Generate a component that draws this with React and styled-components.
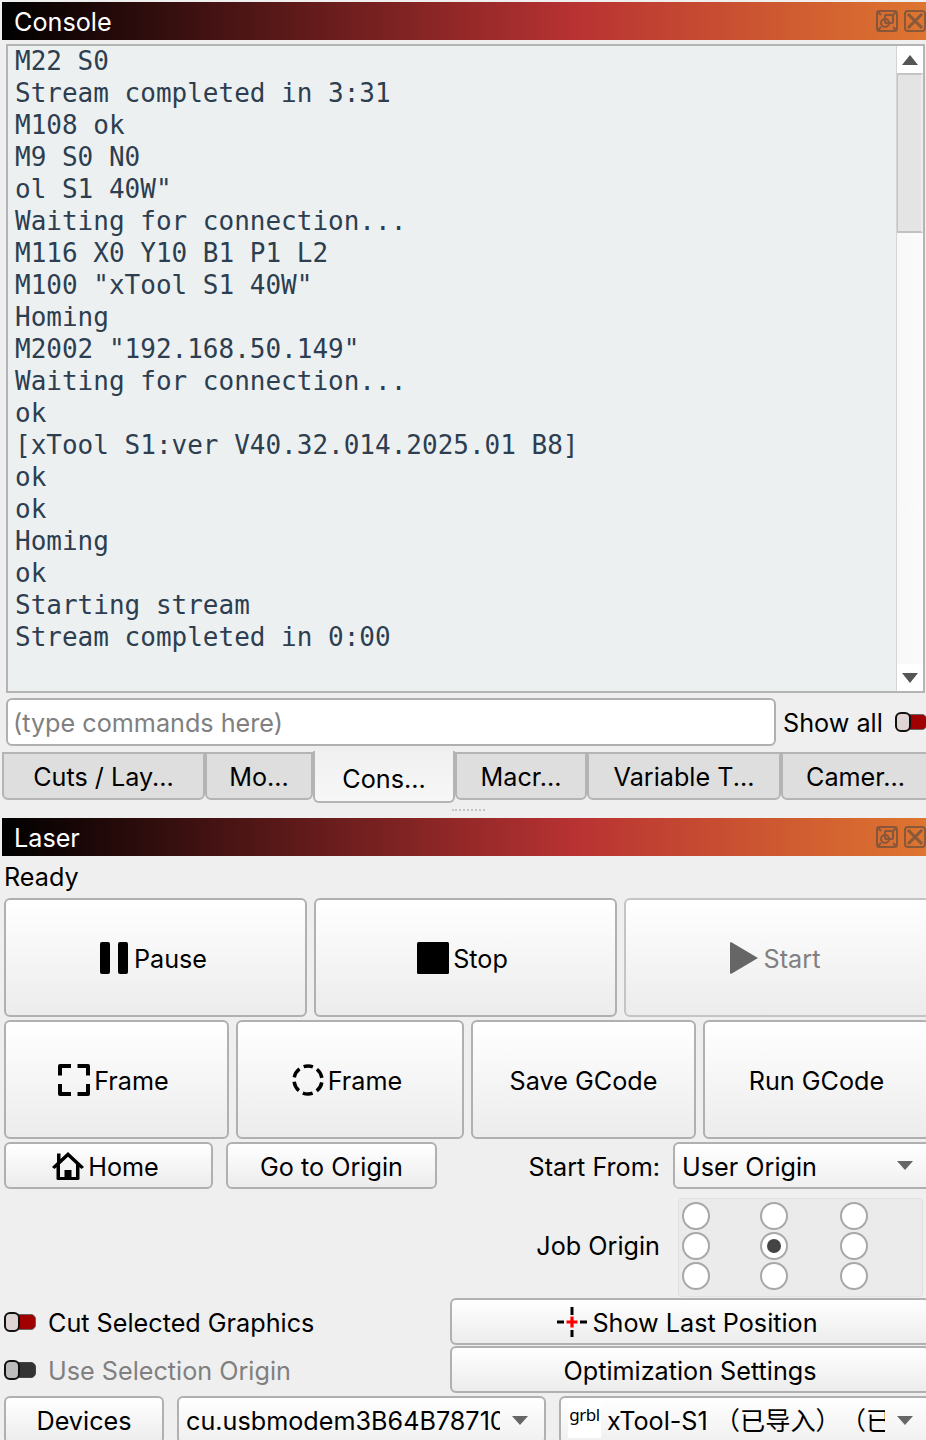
import React from 'react';
import styled, { createGlobalStyle } from 'styled-components';

const GlobalStyle = createGlobalStyle`
  html, body {
    margin: 0;
    padding: 0;
    background: #efefef;
    overflow: hidden;
  }
  * { box-sizing: border-box; }
`;

const SANS = `Inter, "Liberation Sans", "Noto Sans CJK SC", sans-serif`;

const Page = styled.div`
  width: 930px;
  height: 1440px;
  overflow: hidden;
  padding-top: 2px;
  background: #efefef;
  color: #000;
  font-family: ${SANS};
  font-size: 25.2px;
  line-height: 32px;
`;

// text sits a touch below the box centre in the original toolkit
const Label = styled.span`
  display: block;
  padding-top: 2px;
  white-space: nowrap;
`;

const TitleBar = styled.div`
  height: 38px;
  margin-left: 2px;
  width: 924px;
  padding: 0 0 0 12px;
  display: flex;
  align-items: center;
  justify-content: space-between;
  color: #fff;
  background: linear-gradient(90deg, #000 0%, #b83232 62%, #de7530 100%);
`;

const TitleIcons = styled.div`
  display: flex;
  gap: 6px;
  opacity: 0.55;
  filter: blur(0.5px);
`;

const ConsoleBox = styled.div`
  margin: 4px 0 0 6px;
  width: 919px;
  height: 649px;
  display: flex;
  border: 2px solid #b4b4b4;
  background: #ecf0f1;
`;

const ConsoleText = styled.pre`
  flex: 1;
  margin: -1px 0 0;
  padding: 0 0 0 7px;
  font-family: "DejaVu Sans Mono", "Liberation Mono", monospace;
  font-size: 26px;
  line-height: 32px;
  color: #2c3e50;
`;

const ScrollBar = styled.div`
  width: 27px;
  display: flex;
  flex-direction: column;
  background: linear-gradient(90deg, #f8f8f8, #fbfbfb);
  border-left: 1px solid #d4d4d4;
`;

const ScrollButton = styled.div`
  height: 27px;
  display: flex;
  align-items: center;
  justify-content: center;
  background: #fff;
`;

const ScrollHandle = styled.div`
  height: 160px;
  background: #e4e4e4;
  border-top: 2px solid #c4c4c4;
  border-bottom: 2px solid #c0c0c0;
  border-left: 1px solid #c4c4c4;
  border-right: 2px solid #ededed;
`;

const ScrollGap = styled.div`
  flex: 1;
`;

const InputRow = styled.div`
  display: flex;
  align-items: center;
  margin: 5px 0 0 6px;
  height: 48px;
`;

const CommandInput = styled.div`
  width: 770px;
  height: 48px;
  padding: 0 0 0 5px;
  display: flex;
  align-items: center;
  color: #808080;
  background: #fff;
  border: 2px solid #b0b0b0;
  border-radius: 6px;
`;

const ShowAll = styled(Label)`
  margin: 0 12px 0 7px;
`;

const Track = styled.span`
  position: relative;
  display: inline-block;
  flex: none;
  width: 32px;
  height: 16px;
  border-radius: 5px;
  background: ${(p) => (p.$off ? '#333' : '#a00000')};
  border: 1px solid ${(p) => (p.$off ? '#444' : '#666')};
`;

const Knob = styled.span`
  position: absolute;
  left: -1px;
  top: -3px;
  width: 16px;
  height: 20px;
  border-radius: 6px;
  background: ${(p) => (p.$off ? '#bdbdbd' : '#dfd5d5')};
  border: 2px solid #111;
`;

const TabBar = styled.div`
  display: flex;
  align-items: flex-start;
  margin: 6px 0 0 2px;
  height: 53px;
`;

const Tab = styled.div`
  width: ${(p) => p.$w}px;
  height: ${(p) => (p.$active ? 52 : 48)}px;
  padding-top: ${(p) => (p.$active ? 12 : 7)}px;
  margin-top: ${(p) => (p.$active ? -1 : 0)}px;
  text-align: center;
  background: ${(p) => (p.$active ? 'linear-gradient(180deg,#f0f0f0,#f7f7f7)' : '#dedede')};
  border: 2px solid #b4b4b4;
  border-top-width: ${(p) => (p.$active ? 0 : 2)}px;
  border-radius: 0 0 6px 6px;
`;

const Splitter = styled.div`
  margin: 4px 0 0 452px;
  width: 33px;
  height: 8px;
  border-top: 2px dotted #c4c4c4;
`;

const LaserPanel = styled.div`
  margin-top: 1px;
`;

const Status = styled.div`
  margin: 5px 0 0 4px;
  height: 32px;
`;

const ButtonRow = styled.div`
  display: grid;
  grid-template-columns: ${(p) => p.$cols};
  column-gap: ${(p) => p.$gap || 7}px;
  margin: ${(p) => p.$top || 3}px 0 0 4px;
`;

const Button = styled.div`
  height: ${(p) => p.$h || 119}px;
  display: flex;
  align-items: center;
  justify-content: center;
  gap: 4px;
  padding-right: ${(p) => (p.$icon ? 6 : 0)}px;
  color: ${(p) => (p.$disabled ? '#808080' : '#000')};
  background: linear-gradient(180deg, #fff 0%, #ececec 100%);
  border: 2px solid ${(p) => (p.$disabled ? '#c4c4c4' : '#b0b0b0')};
  border-radius: 6px;
`;

const RightLabel = styled.div`
  display: flex;
  align-items: center;
  justify-content: flex-end;
`;

const Combo = styled.div`
  height: ${(p) => p.$h || 47}px;
  display: flex;
  align-items: center;
  padding: 0 12px 0 7px;
  background: linear-gradient(180deg, #fff 0%, #f0f0f0 100%);
  border: 2px solid #b0b0b0;
  border-radius: 6px;
  overflow: hidden;
`;

const ComboText = styled.span`
  flex: 1;
  min-width: 0;
  padding-top: 2px;
  white-space: nowrap;
  overflow: hidden;
`;

const ComboArrow = styled.span`
  flex: none;
  margin-left: 12px;
  margin-right: 4px;
  width: 0;
  height: 0;
  border-left: 8px solid transparent;
  border-right: 8px solid transparent;
  border-top: 9px solid #666;
`;

const OriginRow = styled.div`
  display: flex;
  margin: 9px 0 0 0;
  height: 99px;
`;

const OriginLabel = styled(RightLabel)`
  width: 660px;
  padding-bottom: 6px;
`;

const OriginGrid = styled.div`
  margin-left: 18px;
  width: 245px;
  height: 99px;
  padding: 3px 0 0 3px;
  display: grid;
  grid-template-columns: 78px 80px 28px;
  grid-auto-rows: 30px;
  background: #ebebeb;
  border: 1px solid #e0e0e0;
  border-radius: 4px;
`;

const Radio = styled.span`
  width: 28px;
  height: 28px;
  display: flex;
  align-items: center;
  justify-content: center;
  border-radius: 50%;
  background: #fff;
  border: 2px solid #a8a8a8;
`;

const RadioDot = styled.span`
  width: 14px;
  height: 14px;
  border-radius: 50%;
  background: #444;
`;

const OptionsGrid = styled.div`
  display: grid;
  grid-template-columns: 446px 480px;
  grid-auto-rows: 47px;
  row-gap: 1px;
  margin-top: 1px;
  padding-left: 4px;
`;

const ToggleRow = styled.div`
  display: flex;
  align-items: center;
  gap: 12px;
  color: ${(p) => (p.$disabled ? '#808080' : '#000')};
`;

const BottomRow = styled.div`
  display: grid;
  grid-template-columns: 160px 369px 372px;
  column-gap: 13px;
  margin: 3px 0 0 4px;
`;

const GrblBadge = styled.span`
  flex: none;
  width: 33px;
  height: 36px;
  margin-right: 6px;
  background: #fff;
  font-family: "Noto Sans", sans-serif;
  font-size: 17px;
  line-height: 26px;
  letter-spacing: -0.4px;
  text-align: center;
`;

const FloatIcon = () => (
  <svg width="22" height="22" viewBox="0 0 22 22" fill="none" stroke="#444" strokeWidth="2">
    <rect x="1" y="1" width="20" height="20" rx="3" />
    <rect x="9" y="5" width="8" height="8" rx="1" />
    <circle cx="9" cy="13" r="4" />
    <path d="M1 1l4 4M21 1l-4 4M1 21l4-4M21 21l-4-4" />
  </svg>
);

const CloseIcon = () => (
  <svg width="22" height="22" viewBox="0 0 22 22" fill="none" stroke="#444" strokeWidth="2">
    <rect x="1" y="1" width="20" height="20" rx="3" />
    <path d="M4 4l14 14M18 4L4 18" strokeWidth="3" />
  </svg>
);

const PauseIcon = () => (
  <svg width="32" height="32" viewBox="0 0 32 32" fill="#000">
    <rect x="2" y="0" width="10" height="32" rx="2" />
    <rect x="20" y="0" width="10" height="32" rx="2" />
  </svg>
);

const StopIcon = () => (
  <svg width="32" height="32" viewBox="0 0 32 32" fill="#000">
    <rect width="32" height="32" rx="1.5" />
  </svg>
);

const PlayIcon = () => (
  <svg width="32" height="32" viewBox="0 0 32 32" fill="#666">
    <path d="M2 1.5 C2 0.2 2.8 -0.2 3.8 0.4 L30 16 L3.8 31.6 C2.8 32.2 2 31.8 2 30.5Z" />
  </svg>
);

const FrameRectIcon = () => (
  <svg width="32" height="32" viewBox="0 0 32 32" fill="none" stroke="#000" strokeWidth="4" strokeLinejoin="round">
    <path d="M2 11.5V2h11M19.5 2H30v9.5M30 20v10H19.5M13 30H2V20" />
  </svg>
);

const FrameRoundIcon = () => (
  <svg width="32" height="32" viewBox="0 0 32 32" fill="none" stroke="#000" strokeWidth="3.5">
    <circle cx="16" cy="16" r="14" strokeDasharray="10 4.66" strokeDashoffset="5" transform="rotate(-90 16 16)" />
  </svg>
);

const HomeIcon = () => (
  <svg width="32" height="32" viewBox="0 0 32 32" fill="#000">
    <path d="M16 2 L32 17 L29.5 19 L27.5 17.2 V28.5 Q27.5 30 26 30 H6 Q4.5 30 4.5 28.5 V17.2 L2.5 19 L0 17 L5 12.3 V3.5 H8.5 V9 Z M16 6.8 L8 14.2 V27 H12.5 V20 H19.5 V27 H24 V14.2 Z" fillRule="evenodd" />
  </svg>
);

const CrosshairIcon = () => (
  <svg width="32" height="32" viewBox="0 0 32 32">
    <path d="M14.5 1h3v8h-3zM14.5 24h3v7h-3zM1 14.5h7v3H1zM24 14.5h7v3h-7z" fill="#000" />
    <path d="M14.4 10.5h3.2v3.9h3.9v3.2h-3.9v3.9h-3.2v-3.9h-3.9v-3.2h3.9z" fill="#f00" />
  </svg>
);

const Arrow = ({ up }) => (
  <svg width="16" height="10" viewBox="0 0 16 10" fill="#555">
    <path d={up ? 'M8 0l8 10H0z' : 'M0 0h16L8 10z'} />
  </svg>
);

const Toggle = ({ off }) => (
  <Track $off={off}>
    <Knob $off={off} />
  </Track>
);

const consoleLines = [
  'M22 S0',
  'Stream completed in 3:31',
  'M108 ok',
  'M9 S0 N0',
  'ol S1 40W"',
  'Waiting for connection...',
  'M116 X0 Y10 B1 P1 L2',
  'M100 "xTool S1 40W"',
  'Homing',
  'M2002 "192.168.50.149"',
  'Waiting for connection...',
  'ok',
  '[xTool S1:ver V40.32.014.2025.01 B8]',
  'ok',
  'ok',
  'Homing',
  'ok',
  'Starting stream',
  'Stream completed in 0:00',
];

const tabs = [
  { label: 'Cuts / Lay...', w: 203 },
  { label: 'Mo...', w: 108 },
  { label: 'Cons...', w: 142, active: true },
  { label: 'Macr...', w: 132 },
  { label: 'Variable T...', w: 194 },
  { label: 'Camer...', w: 149 },
];

export default function App() {
  return (
    <Page>
      <GlobalStyle />
      <TitleBar>
        <Label>Console</Label>
        <TitleIcons>
          <FloatIcon />
          <CloseIcon />
        </TitleIcons>
      </TitleBar>
      <ConsoleBox>
        <ConsoleText>{consoleLines.join('\n')}</ConsoleText>
        <ScrollBar>
          <ScrollButton><Arrow up /></ScrollButton>
          <ScrollHandle />
          <ScrollGap />
          <ScrollButton><Arrow /></ScrollButton>
        </ScrollBar>
      </ConsoleBox>
      <InputRow>
        <CommandInput><Label>(type commands here)</Label></CommandInput>
        <ShowAll>Show all</ShowAll>
        <Toggle />
      </InputRow>
      <TabBar>
        {tabs.map((t) => (
          <Tab key={t.label} $w={t.w} $active={t.active}>{t.label}</Tab>
        ))}
      </TabBar>
      <Splitter />
      <LaserPanel>
        <TitleBar>
          <Label>Laser</Label>
          <TitleIcons>
            <FloatIcon />
            <CloseIcon />
          </TitleIcons>
        </TitleBar>
        <Status>Ready</Status>
        <ButtonRow $cols="303px 303px 306px" $top={5}>
          <Button $icon><PauseIcon /><Label>Pause</Label></Button>
          <Button $icon><StopIcon /><Label>Stop</Label></Button>
          <Button $icon $disabled><PlayIcon /><Label>Start</Label></Button>
        </ButtonRow>
        <ButtonRow $cols="225px 228px 225px 227px">
          <Button $icon><FrameRectIcon /><Label>Frame</Label></Button>
          <Button $icon><FrameRoundIcon /><Label>Frame</Label></Button>
          <Button><Label>Save GCode</Label></Button>
          <Button><Label>Run GCode</Label></Button>
        </ButtonRow>
        <ButtonRow $cols="209px 211px 210px 258px" $gap={13}>
          <Button $h={47} $icon><HomeIcon /><Label>Home</Label></Button>
          <Button $h={47}><Label>Go to Origin</Label></Button>
          <RightLabel><Label>Start From:</Label></RightLabel>
          <Combo><ComboText>User Origin</ComboText><ComboArrow /></Combo>
        </ButtonRow>
        <OriginRow>
          <OriginLabel><Label>Job Origin</Label></OriginLabel>
          <OriginGrid>
            <Radio /><Radio /><Radio />
            <Radio /><Radio><RadioDot /></Radio><Radio />
            <Radio /><Radio /><Radio />
          </OriginGrid>
        </OriginRow>
        <OptionsGrid>
          <ToggleRow><Toggle /><Label>Cut Selected Graphics</Label></ToggleRow>
          <Button $h={47} $icon><CrosshairIcon /><Label>Show Last Position</Label></Button>
          <ToggleRow $disabled><Toggle off /><Label>Use Selection Origin</Label></ToggleRow>
          <Button $h={47}><Label>Optimization Settings</Label></Button>
        </OptionsGrid>
        <BottomRow>
          <Button $h={48}><Label>Devices</Label></Button>
          <Combo $h={48}>
            <ComboText>cu.usbmodem3B64B78710</ComboText>
            <ComboArrow />
          </Combo>
          <Combo $h={48}>
            <GrblBadge>grbl</GrblBadge>
            <ComboText>xTool-S1 （已导入）　（已导入）</ComboText>
            <ComboArrow />
          </Combo>
        </BottomRow>
      </LaserPanel>
    </Page>
  );
}
